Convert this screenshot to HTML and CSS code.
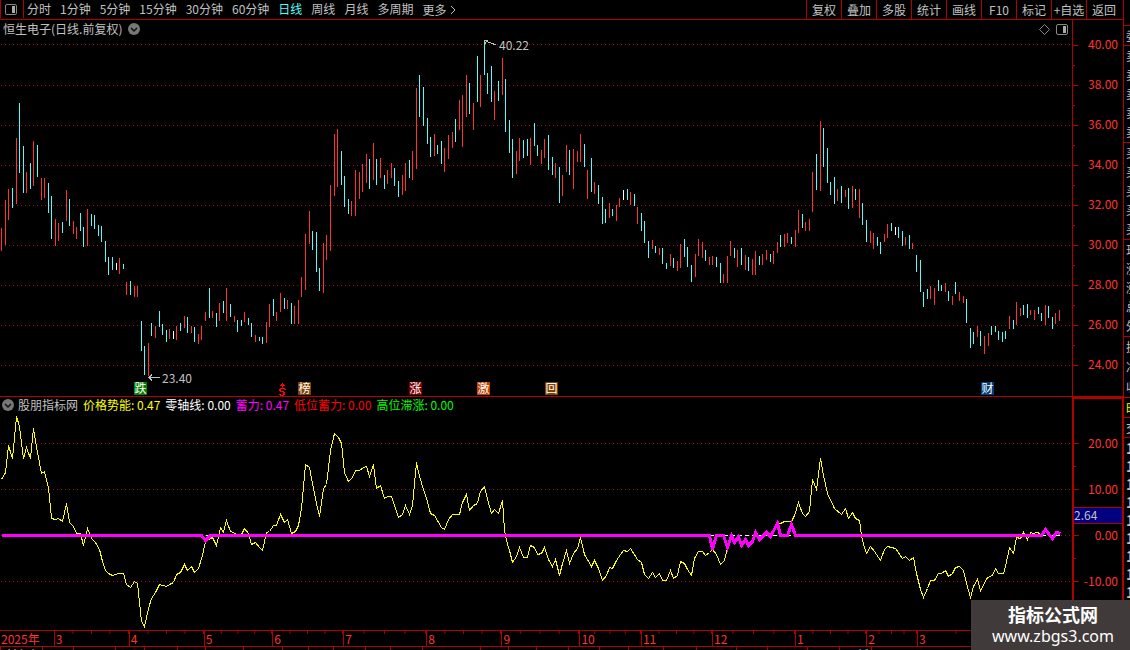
FILE: index.html
```html
<!DOCTYPE html>
<html lang="zh-CN">

<head>
    <meta charset="UTF-8">
    <meta name="viewport" content="width=device-width, initial-scale=1.0">
    <title>恒生电子 日线</title>
    <link rel="stylesheet" href="styles.css">
</head>

<body>

    <div id="terminal">
        <nav id="toolbar">
            <button class="panel-toggle" aria-label="侧栏">
                <svg width="12" height="11" viewBox="0 0 12 11"><rect x=".5" y=".5" width="11" height="10" rx="1.5" fill="none" stroke="#888"/><rect x="7" y="2" width="3" height="7" fill="#aaa"/></svg>
            </button>
            <div class="periods">
                <a href="#">分时</a>
                <a href="#">1分钟</a>
                <a href="#">5分钟</a>
                <a href="#">15分钟</a>
                <a href="#">30分钟</a>
                <a href="#">60分钟</a>
                <a href="#" class="active">日线</a>
                <a href="#">周线</a>
                <a href="#">月线</a>
                <a href="#">多周期</a>
                <a href="#" class="more">更多<svg width="6" height="10" viewBox="0 0 6 10"><path d="M1 1l4 4-4 4" fill="none" stroke="#c0c0c0"/></svg></a>
            </div>
            <div class="tools">
                <button>复权</button>
                <button>叠加</button>
                <button>多股</button>
                <button>统计</button>
                <button>画线</button>
                <button>F10</button>
                <button>标记</button>
                <button>+自选</button>
                <button>返回</button>
            </div>
        </nav>

        <section id="price" class="pane">
            <div class="plot">
                <svg id="priceSvg" viewBox="0 20 1072 376" preserveAspectRatio="none"></svg>
                <div class="caption">
                    <span>恒生电子(日线.前复权)</span>
                    <svg class="chevron" width="12" height="12" viewBox="0 0 12 12"><circle cx="6" cy="6" r="6" fill="#777"/><path d="M3 5l3 3 3-3" fill="none" stroke="#111" stroke-width="1.5"/></svg>
                    <svg class="diamond" width="11" height="11" viewBox="0 0 11 11"><path d="M5.5 .5l5 5-5 5-5-5z" fill="none" stroke="#888"/></svg>
                    <svg width="12" height="11" viewBox="0 0 12 11"><rect x=".5" y=".5" width="11" height="10" rx="1.5" fill="none" stroke="#888"/><rect x="7" y="2" width="3" height="7" fill="#aaa"/></svg>
                </div>
                <div id="events"></div>
            </div>
            <div class="axis">
                <span>40.00</span>
                <span>38.00</span>
                <span>36.00</span>
                <span>34.00</span>
                <span>32.00</span>
                <span>30.00</span>
                <span>28.00</span>
                <span>26.00</span>
                <span>24.00</span>
            </div>
        </section>

        <section id="indicator" class="pane">
            <div class="plot">
                <svg id="indicatorSvg" viewBox="0 397 1072 233" preserveAspectRatio="none"></svg>
                <div class="caption">
                    <svg width="12" height="12" viewBox="0 0 12 12"><circle cx="6" cy="6" r="6" fill="#777"/><path d="M3 5l3 3 3-3" fill="none" stroke="#111" stroke-width="1.5"/></svg>
                    <span>股朋指标网</span>
                    <span class="yellow">价格势能: 0.47</span>
                    <span class="white">零轴线: 0.00</span>
                    <span class="magenta">蓄力: 0.47</span>
                    <span class="red">低位蓄力: 0.00</span>
                    <span class="green">高位滞涨: 0.00</span>
                </div>
            </div>
            <div class="axis">
                <span>20.00</span>
                <span>10.00</span>
                <span>0.00</span>
                <span>-10.00</span>
                <b class="cursor-value">2.64</b>
            </div>
        </section>

        <div id="months"></div>
        <div id="status"><svg id="statusSvg" viewBox="0 0 1072 3" preserveAspectRatio="none"></svg><span>前复权</span><span class="cyan">更新</span></div>
    </div>

    <aside id="quote">
        <div class="block head"></div>
        <div class="block row"><span>委比</span></div>
        <div class="block book"><span>卖五</span><span>卖四</span><span>卖三</span><span>卖二</span><span>卖一</span></div>
        <div class="block book"><span>买一</span><span>买二</span><span>买三</span><span>买四</span><span>买五</span></div>
        <div class="block book"><span>现价</span><span>涨跌</span><span>涨幅</span><span>总量</span><span>外盘</span></div>
        <div class="block facts"><span>换手</span><span>净资</span><span>收益</span></div>
        <div class="block row yellow"><span>时间</span></div>
        <div class="block row"><span>交易</span></div>
        <div class="deals"><span>14</span><span>14</span><span>14</span><span>14</span><span>14</span><span>14</span><span>14</span><span>14</span><span>14</span></div>
    </aside>

    <div id="brand">
        <strong>指标公式网</strong>
        <span>www.zbgs3.com</span>
    </div>

    <script src="chart.js"></script>
</body>

</html>
```
FILE: styles.css
```css
body {
    display: flex;
    margin: 0;
    min-height: 100vh;
    background: #000;
    color: #c0c0c0;
    font-family: "Noto Sans CJK SC", sans-serif;
    font-size: 12px;
    line-height: 18px;
    overflow: hidden;
}

a {
    color: inherit;
    text-decoration: none;
}

button {
    padding: 0;
    border: 0;
    background: none;
    color: inherit;
    font: inherit;
}

.yellow { color: #ffff00; }
.white { color: #fff; }
.magenta { color: #ff00ff; }
.red { color: #ff0000; }
.green { color: #00ff00; }
.cyan { color: #54fcfc; }

#terminal {
    flex: 1;
    min-width: 0;
    border-right: 1px solid #b00000;
}

/* toolbar */
#toolbar {
    display: flex;
    height: 19px;
    border-bottom: 1px solid #b00000;
}

.panel-toggle {
    display: flex;
    align-items: center;
    box-sizing: border-box;
    width: 24px;
    height: 18px;
    padding-left: 4px;
    border: solid #b00000;
    border-width: 0 1px;
}

.periods {
    display: flex;
    flex: 1;
    gap: 9px;
    padding-left: 3px;
    white-space: nowrap;
}

.periods .active {
    color: #54fcfc;
}

.more {
    display: flex;
    align-items: center;
    gap: 4px;
}

.tools {
    display: grid;
    grid-template-columns: repeat(9, 35px);
    margin-right: 2px;
}

.tools button {
    border-left: 1px solid #b00000;
    line-height: 17px;
    white-space: nowrap;
}

/* charts */
.pane {
    display: flex;
}

.plot {
    position: relative;
    flex: 1;
    min-width: 0;
}

.plot > svg {
    display: block;
    width: 100%;
    shape-rendering: crispEdges;
}

#priceSvg {
    height: 376px;
}

#indicatorSvg {
    height: 233px;
}

#price {
    border-bottom: 1px solid #b00000;
}

.caption {
    position: absolute;
    top: 0;
    left: 0;
    right: 0;
    display: flex;
    align-items: center;
    gap: 6px;
    padding: 0 4px 0 3px;
    white-space: nowrap;
}

#indicator .caption {
    gap: 5px;
    padding: 0 2px;
    line-height: 16px;
}

#indicator .caption svg {
    margin-right: -1px;
}

.diamond {
    margin-left: auto;
}

.axis {
    position: relative;
    box-sizing: border-box;
    width: 51px;
    border-left: 1px solid #b00000;
    color: #ff3232;
    text-align: right;
}

.axis span {
    position: relative;
    display: block;
    height: 40px;
    padding-right: 5px;
    line-height: 38px;
}

.axis span::before,
.axis span::after {
    content: "";
    position: absolute;
    left: 0;
    top: 50%;
    width: 5px;
    height: 1px;
    background: #b00000;
}

.axis span::after {
    top: 100%;
    width: 2px;
}

.axis span:last-of-type::after {
    display: none;
}

#price .axis {
    padding-top: 5px;
}

#indicator .axis {
    padding-top: 21px;
    border: 2px solid #b00000;
    border-width: 2px 1px 0 2px;
}

#indicator .axis span {
    height: 46px;
    padding-right: 4px;
    line-height: 46px;
}

.cursor-value {
    position: absolute;
    top: 108px;
    left: 0;
    right: 0;
    height: 15px;
    border: solid #b00000;
    border-width: 1px 0;
    background: #000080;
    color: #c0c0c0;
    font-weight: normal;
    line-height: 13px;
    text-align: left;
}

.event {
    position: absolute;
    bottom: 1px;
    width: 13px;
    height: 13px;
    color: #fff;
    line-height: 12px;
    text-align: center;
}

.event.fall { background: #008000; }
.event.rank { background: #804000; }
.event.rise { background: #800000; }
.event.incentive { background: #c04000; }
.event.buyback { background: #804000; }
.event.report { background: #003c78; }
.event.bonus { bottom: 0; color: #ff0000; }

.note {
    position: absolute;
    line-height: 12px;
}

/* time axis */
#months {
    display: flex;
    height: 15px;
    margin-right: 51px;
    border: solid #b00000;
    border-width: 1px 0;
    color: #ff3232;
    line-height: 15px;
}

.month {
    flex-basis: 0;
    box-sizing: border-box;
    min-width: 0;
    padding-left: 1px;
    border-left: 1px solid #b00000;
    background: linear-gradient(to right, #b00000 1px, transparent 1px) -1px 0 / 25% 3px repeat-x;
    white-space: nowrap;
}

.month:first-child {
    border-left: 0;
    background: none;
}

#status {
    position: relative;
    display: flex;
    justify-content: space-between;
    height: 3px;
    padding: 0 254px 0 6px;
    overflow: hidden;
    line-height: 16px;
}

#statusSvg {
    position: absolute;
    left: 0;
    width: calc(100% - 51px);
    height: 3px;
}

/* clipped quote column */
#quote {
    width: 6px;
    height: 100vh;
    overflow: hidden;
    white-space: nowrap;
}

.block {
    display: flex;
    flex-direction: column;
    justify-content: space-around;
    box-sizing: border-box;
    border-bottom: 1px solid #b00000;
    padding-left: 2px;
}

.head { height: 26px; }
.row { height: 20px; }
.book { height: 97px; }
.facts { height: 61px; }

.deals {
    padding: 1px 0 0 2px;
    font-weight: bold;
}

.deals span {
    display: block;
    font-size: 14px;
    line-height: 18px;
}

#brand {
    position: fixed;
    right: 0;
    bottom: 0;
    display: flex;
    flex-direction: column;
    align-items: center;
    box-sizing: border-box;
    width: 159px;
    height: 50px;
    padding: 2px 0 0 5px;
    background: #403a3a;
    color: #fff;
}

#brand strong {
    font-size: 18px;
    line-height: 24px;
}

#brand span {
    font-family: "Noto Sans", sans-serif;
    font-size: 16px;
    line-height: 20px;
}
```
FILE: chart.js
```js
const WIDTH = 1072;
const COLORS = { r: '#ff3232', c: '#54fcfc', w: '#ffffff' };

// x, high, low, colour
const bars = `1 228 251 r,5 200 245 r,8 189 220 r,12 188 208 c,16 138 204 r,19 103 173 c,23 146 193 c,26 172 193 r,30 163 189 c,33 141 186 r,
37 145 177 c,41 178 200 r,44 178 198 r,48 183 213 c,51 196 239 c,55 219 246 r,58 223 241 r,62 222 233 c,66 190 221 r,69 199 226 c,
73 221 234 r,76 227 239 r,80 213 231 c,83 227 247 c,87 209 246 r,91 214 226 c,94 215 229 c,98 225 236 c,101 226 242 c,105 241 262 c,
108 257 275 c,112 257 270 c,116 263 270 w,119 258 274 r,123 264 269 c,126 282 295 r,130 281 295 c,134 286 297 r,137 286 297 r,141 321 351 c,
144 346 375 c,148 343 376 r,151 323 336 c,155 326 338 r,159 311 327 c,162 324 335 c,166 330 342 c,169 329 339 r,173 331 339 w,176 326 340 r,
180 323 331 c,184 316 328 r,187 317 333 c,191 326 333 r,194 327 342 c,198 334 344 r,201 326 340 r,205 312 321 r,209 288 318 c,212 311 318 r,
216 313 327 c,219 303 321 r,223 301 313 c,226 288 321 r,230 304 317 c,234 316 322 r,237 320 332 c,241 320 326 c,244 312 322 r,248 318 325 c,
251 323 337 c,255 335 342 r,259 337 341 c,262 337 344 c,266 322 343 r,269 304 327 r,273 299 316 c,276 312 321 r,280 293 312 r,284 298 309 c,
287 300 309 r,291 303 324 c,294 306 324 r,298 300 324 r,301 277 297 r,305 234 290 r,309 211 244 r,312 231 250 c,316 232 272 c,319 268 291 c,
323 243 293 r,326 235 260 r,330 185 251 r,334 134 196 r,337 129 187 r,341 151 185 c,344 176 207 c,348 199 214 c,351 201 216 r,355 170 216 r,
359 172 199 r,362 164 192 r,366 154 183 r,369 159 189 c,373 143 180 r,376 159 185 c,380 158 178 r,384 175 189 c,387 170 184 r,391 163 178 r,
394 168 186 c,398 181 197 c,402 175 195 r,405 163 191 r,409 160 178 c,412 151 180 r,416 88 169 r,419 75 117 c,423 87 126 c,427 118 144 c,
430 137 157 c,434 134 156 r,437 145 154 c,441 141 164 c,444 148 172 r,448 135 159 r,452 132 148 r,455 119 142 c,459 100 130 r,462 95 147 r,
466 75 117 r,469 83 114 c,473 103 130 r,477 56 102 c,480 75 107 r,484 40 75 c,487 73 94 c,491 66 102 c,494 91 120 r,498 81 101 c,
502 58 95 r,505 79 132 c,509 120 153 c,512 139 178 c,516 151 174 r,519 138 161 r,523 140 158 c,527 139 156 c,530 138 165 r,534 123 146 c,
537 145 156 c,541 150 164 r,544 139 158 r,548 135 170 c,552 157 175 c,555 163 178 r,559 167 203 c,562 175 196 r,566 145 172 r,569 150 175 c,
573 149 189 r,577 151 162 r,580 134 162 r,584 144 167 c,587 170 199 r,591 158 192 c,594 182 194 r,598 185 204 c,602 197 224 c,605 209 223 c,
609 203 218 r,612 209 216 c,616 205 221 r,619 198 207 r,623 190 200 w,627 189 200 c,630 192 205 r,634 194 206 c,637 207 224 r,641 213 231 c,
644 221 243 c,648 241 258 c,652 240 249 r,655 246 253 c,659 248 255 r,662 248 264 c,666 263 269 c,670 254 266 r,673 258 268 c,677 261 271 r,
680 244 268 r,684 239 257 c,687 247 267 c,691 265 282 c,695 254 277 r,698 239 256 r,702 242 258 r,705 250 261 c,709 257 265 r,712 256 265 r,
716 257 267 c,720 263 283 c,723 274 283 r,727 256 283 r,730 241 256 r,734 248 258 c,737 250 267 r,741 248 265 c,745 255 270 r,748 257 271 c,
752 259 275 r,755 251 275 r,759 256 265 c,762 254 265 r,766 250 260 r,770 254 262 c,773 251 264 r,777 242 253 r,780 235 247 c,784 234 247 r,
787 233 243 r,791 237 244 c,795 230 247 r,798 210 233 r,802 214 228 c,805 222 231 r,809 219 231 r,812 172 212 r,816 154 190 c,820 121 191 r,
823 128 167 c,827 148 183 c,830 182 195 c,834 177 204 c,837 189 201 r,841 186 203 c,845 190 197 r,848 188 209 c,852 186 208 r,855 189 200 c,
859 189 218 r,862 203 225 c,866 220 242 c,870 231 243 r,873 233 249 r,877 237 246 c,880 242 254 c,884 234 242 r,887 224 238 r,891 223 231 c,
895 227 235 w,898 227 238 c,902 231 246 c,905 237 245 r,909 235 249 c,912 243 249 r,916 255 272 c,920 260 292 c,923 292 307 c,927 289 299 c,
930 286 299 r,934 288 305 r,938 280 291 c,941 285 291 c,945 283 292 r,948 291 301 c,952 296 305 r,955 282 294 c,959 292 301 r,963 296 303 r,
966 299 323 c,970 328 348 c,973 332 344 c,977 326 337 r,980 331 346 c,984 336 354 r,988 333 346 r,991 326 335 c,995 326 332 c,998 331 340 c,
1002 332 342 c,1005 331 339 c,1009 316 329 r,1013 320 329 c,1016 302 325 r,1020 308 316 r,1023 305 315 c,1027 304 318 c,1030 310 315 r,
1034 310 320 r,1038 307 314 c,1041 313 321 c,1045 305 325 r,1048 306 318 c,1052 317 329 c,1055 313 324 r,1059 310 321 r`;

const momentum = `1,479 5,472 8,445 12,458 16,416 19,426 23,458 26,447 30,458 33,428 37,452 41,473 44,471 48,487 51,518 55,519 58,518 62,521 66,503 69,522
73,526 76,533 80,533 83,545 87,528 91,538 95,542 99,549 102,561 105,570 108,573 112,575 118,573 123,573 126,584 130,587 134,581 137,583 139,602 141,621
144,626 148,608 151,598 155,592 159,584 166,586 169,584 173,582 176,574 180,572 184,564 187,570 191,566 194,572 198,568 202,555 205,541 212,537 216,545
220,527 223,532 226,520 230,531 237,534 241,534 244,528 248,533 251,544 255,542 259,547 262,550 266,532 269,531 273,525 276,525 280,514 284,522 287,519
291,533 295,531 298,525 301,508 305,464 309,467 312,483 316,503 319,516 323,488 326,484 330,450 334,433 338,437 341,443 344,472 348,481 352,477 355,470
359,470 363,467 366,466 369,476 373,464 376,488 380,485 384,498 387,496 391,496 395,508 398,517 402,514 405,505 409,514 412,505 416,462 419,476 423,489
427,501 430,513 434,515 437,520 441,527 444,529 448,519 452,514 459,514 462,502 466,494 469,510 473,505 477,503 480,491 484,486 487,499 491,513 494,509
498,513 502,500 504,530 506,540 509,550 512,562 516,556 519,547 523,557 527,557 530,545 534,547 537,554 541,553 544,547 548,559 552,566 555,559 559,575
562,563 566,550 569,563 573,553 577,548 580,537 584,554 591,566 594,560 598,568 602,580 606,575 609,567 612,568 616,560 620,554 623,550 627,551 630,548
637,559 641,562 644,574 648,578 652,572 655,577 659,573 662,580 666,580 670,570 673,578 677,575 680,561 684,563 687,569 691,575 694,558 698,551 702,551
705,555 709,552 712,549 716,554 720,564 724,560 727,547 731,535 734,542 738,536 741,545 745,539 748,545 752,541 755,532 759,539 766,532 770,536 777,523
780,523 784,521 791,521 794,515 798,502 802,513 805,516 809,511 812,479 816,489 820,458 823,475 827,493 834,508 841,514 845,508 848,518 852,512 855,518
859,520 861,535 863,544 866,553 870,546 874,551 880,560 884,549 887,546 895,548 902,558 905,556 909,560 913,557 916,573 920,589 923,597 927,588 930,580
934,580 938,573 941,573 945,570 948,576 952,573 955,567 959,566 963,570 966,583 970,597 973,586 977,579 980,590 987,577 992,575 995,568 998,573 1003,573
1005,566 1009,547 1013,553 1016,537 1020,538 1023,532 1027,539 1030,532 1033,533 1036,532 1040,533`;

const force = `1,535 201,535 205,540 210,535 709,535 712,549 716,535 723,535 727,547 731,535 734,542 738,536 741,545 745,539 748,545 752,541 755,532
759,539 766,532 770,536 777,523 780,535 787,535 791,524 795,535 1041,535 1045,529 1052,538 1056,532 1060,533`;

const events = [
    [134, '跌', 'fall'], [298, '榜', 'rank'], [409, '涨', 'rise'],
    [477, '激', 'incentive'], [545, '回', 'buyback'], [981, '财', 'report']
];

// label, share of the axis
const months = [
    ['2025年', 54], ['3', 75], ['4', 75], ['5', 68], ['6', 71], ['7', 83], ['8', 75], ['9', 78],
    ['10', 61], ['11', 71], ['12', 83], ['1', 71], ['2', 50], ['3', 157]
];

const statusTicks = [0, 42, 73, 115, 144, 177, 205, 243, 282, 308, 333, 365, 390, 422, 480, 508, 536,
    568, 599, 628, 663, 696, 736, 767, 807, 839, 871];

function gridLine(y) {
    return `<path d="M1 ${y}.5H${WIDTH}" stroke="#a80c0c" stroke-dasharray="1 3"/>`;
}

function drawPrice() {
    let out = [44, 85, 125, 165, 205, 245, 285, 325, 365].map(gridLine).join('');
    bars.split(',').forEach(row => {
        const [x, high, low, color] = row.trim().split(' ');
        out += `<rect x="${x}" y="${high}" width="1" height="${low - high}" fill="${COLORS[color]}"/>`;
    });
    // arrows to the highest and the lowest price
    out += '<path d="M484.5 40.5H488M484.5 40.5l1 4M484.5 40.5L496 45" fill="none" stroke="#c0c0c0"/>';
    out += '<path d="M160 377.5H149M152 374.5l-3 3 3 3" fill="none" stroke="#c0c0c0"/>';
    document.getElementById('priceSvg').innerHTML = out;
}

function drawIndicator() {
    let out = [443, 489, 535, 581].map(gridLine).join('');
    out += `<g fill="none" transform="translate(.5 .5)">
        <polyline points="${momentum}" stroke="#ffff00"/>
        <path d="M205 535H212M709 535H795M1041 535H1060" stroke="#fff" stroke-dasharray="4 3"/>
        <polyline points="${force}" stroke="#ff00ff" stroke-width="3"/>
    </g>`;
    document.getElementById('indicatorSvg').innerHTML = out;
}

function percent(x) {
    return (x / WIDTH * 100).toFixed(3) + '%';
}

function drawEvents() {
    let out = events.map(([x, text, type]) =>
        `<span class="event ${type}" style="left:${percent(x)}">${text}</span>`).join('');
    out += `<svg class="event bonus" style="left:${percent(278)}" viewBox="0 0 13 13">
        <path d="M4 0h1v1h1v1h1v1H2V2h1V1h1zM2 5h5v1h1v1H6V6H3v2h3v1h1v3H6v1H2v-1H1v-1h2v1h2V9H2V8H1V6h1zM4 3h1v2H4z" fill="#f00"/></svg>`;
    out += `<span class="note" style="left:${percent(499)};top:19px">40.22</span>`;
    out += `<span class="note" style="left:${percent(162)};top:352px">23.40</span>`;
    document.getElementById('events').innerHTML = out;
}

function drawMonths() {
    document.getElementById('months').innerHTML = months.map(([label, share]) =>
        `<div class="month" style="flex-grow:${share}">${label}</div>`).join('');
    document.getElementById('statusSvg').innerHTML = statusTicks.map(x =>
        `<rect x="${x}" y="0" width="1" height="3" fill="#b00000"/>`).join('');
}

drawPrice();
drawIndicator();
drawEvents();
drawMonths();
```
